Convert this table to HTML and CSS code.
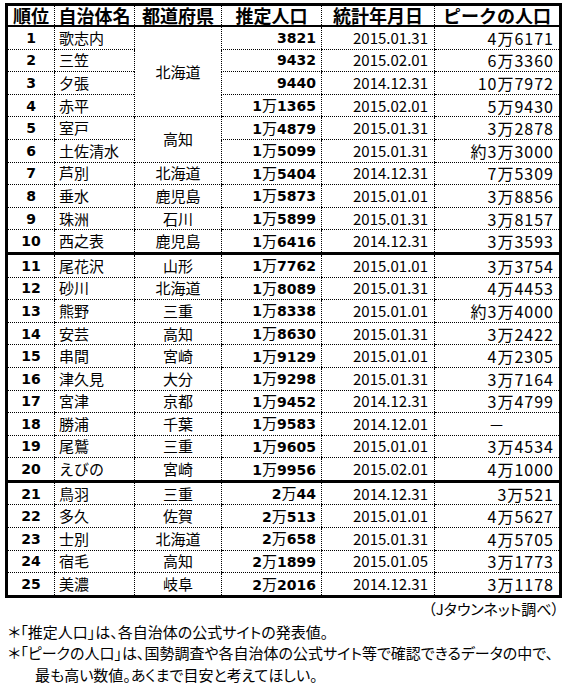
FILE: index.html
```html
<!DOCTYPE html>
<html lang="ja">
<head>
<meta charset="utf-8">
<title>人口の少ない市</title>
<link rel="stylesheet" href="styles.css">
</head>
<body>
<div class="page">
<table class="pop">
<colgroup>
<col class="c1"><col class="c2"><col class="c3"><col class="c4"><col class="c5"><col class="c6">
</colgroup>
<thead>
<tr><th>順位</th><th>自治体名</th><th>都道府県</th><th>推定人口</th><th>統計年月日</th><th>ピークの人口</th></tr>
</thead>
<tbody>
<tr><td class="rk">1</td><td class="nm">歌志内</td><td class="pf" rowspan="4">北海道</td><td class="est">3821</td><td class="dt">2015.01.31</td><td class="pk">4万6171</td></tr>
<tr><td class="rk">2</td><td class="nm">三笠</td><td class="est">9432</td><td class="dt">2015.02.01</td><td class="pk">6万3360</td></tr>
<tr><td class="rk">3</td><td class="nm">夕張</td><td class="est">9440</td><td class="dt">2014.12.31</td><td class="pk">10万7972</td></tr>
<tr><td class="rk">4</td><td class="nm">赤平</td><td class="est">1<span class="man">万</span>1365</td><td class="dt">2015.02.01</td><td class="pk">5万9430</td></tr>
<tr><td class="rk">5</td><td class="nm">室戸</td><td class="pf" rowspan="2">高知</td><td class="est">1<span class="man">万</span>4879</td><td class="dt">2015.01.31</td><td class="pk">3万2878</td></tr>
<tr><td class="rk">6</td><td class="nm">土佐清水</td><td class="est">1<span class="man">万</span>5099</td><td class="dt">2015.01.31</td><td class="pk">約3万3000</td></tr>
<tr><td class="rk">7</td><td class="nm">芦別</td><td class="pf">北海道</td><td class="est">1<span class="man">万</span>5404</td><td class="dt">2014.12.31</td><td class="pk">7万5309</td></tr>
<tr><td class="rk">8</td><td class="nm">垂水</td><td class="pf">鹿児島</td><td class="est">1<span class="man">万</span>5873</td><td class="dt">2015.01.01</td><td class="pk">3万8856</td></tr>
<tr><td class="rk">9</td><td class="nm">珠洲</td><td class="pf">石川</td><td class="est">1<span class="man">万</span>5899</td><td class="dt">2015.01.31</td><td class="pk">3万8157</td></tr>
<tr class="sep"><td class="rk">10</td><td class="nm">西之表</td><td class="pf">鹿児島</td><td class="est">1<span class="man">万</span>6416</td><td class="dt">2014.12.31</td><td class="pk">3万3593</td></tr>
<tr><td class="rk">11</td><td class="nm">尾花沢</td><td class="pf">山形</td><td class="est">1<span class="man">万</span>7762</td><td class="dt">2015.01.01</td><td class="pk">3万3754</td></tr>
<tr><td class="rk">12</td><td class="nm">砂川</td><td class="pf">北海道</td><td class="est">1<span class="man">万</span>8089</td><td class="dt">2015.01.31</td><td class="pk">4万4453</td></tr>
<tr><td class="rk">13</td><td class="nm">熊野</td><td class="pf">三重</td><td class="est">1<span class="man">万</span>8338</td><td class="dt">2015.01.01</td><td class="pk">約3万4000</td></tr>
<tr><td class="rk">14</td><td class="nm">安芸</td><td class="pf">高知</td><td class="est">1<span class="man">万</span>8630</td><td class="dt">2015.01.31</td><td class="pk">3万2422</td></tr>
<tr><td class="rk">15</td><td class="nm">串間</td><td class="pf">宮崎</td><td class="est">1<span class="man">万</span>9129</td><td class="dt">2015.01.01</td><td class="pk">4万2305</td></tr>
<tr><td class="rk">16</td><td class="nm">津久見</td><td class="pf">大分</td><td class="est">1<span class="man">万</span>9298</td><td class="dt">2015.01.31</td><td class="pk">3万7164</td></tr>
<tr><td class="rk">17</td><td class="nm">宮津</td><td class="pf">京都</td><td class="est">1<span class="man">万</span>9452</td><td class="dt">2014.12.31</td><td class="pk">3万4799</td></tr>
<tr><td class="rk">18</td><td class="nm">勝浦</td><td class="pf">千葉</td><td class="est">1<span class="man">万</span>9583</td><td class="dt">2014.12.01</td><td class="pk dash">－</td></tr>
<tr><td class="rk">19</td><td class="nm">尾鷲</td><td class="pf">三重</td><td class="est">1<span class="man">万</span>9605</td><td class="dt">2015.01.01</td><td class="pk">3万4534</td></tr>
<tr class="sep"><td class="rk">20</td><td class="nm">えびの</td><td class="pf">宮崎</td><td class="est">1<span class="man">万</span>9956</td><td class="dt">2015.02.01</td><td class="pk">4万1000</td></tr>
<tr><td class="rk">21</td><td class="nm">鳥羽</td><td class="pf">三重</td><td class="est">2<span class="man">万</span>44</td><td class="dt">2014.12.31</td><td class="pk">3万521</td></tr>
<tr><td class="rk">22</td><td class="nm">多久</td><td class="pf">佐賀</td><td class="est">2<span class="man">万</span>513</td><td class="dt">2015.01.01</td><td class="pk">4万5627</td></tr>
<tr><td class="rk">23</td><td class="nm">士別</td><td class="pf">北海道</td><td class="est">2<span class="man">万</span>658</td><td class="dt">2015.01.31</td><td class="pk">4万5705</td></tr>
<tr><td class="rk">24</td><td class="nm">宿毛</td><td class="pf">高知</td><td class="est">2<span class="man">万</span>1899</td><td class="dt">2015.01.05</td><td class="pk">3万1773</td></tr>
<tr><td class="rk">25</td><td class="nm">美濃</td><td class="pf">岐阜</td><td class="est">2<span class="man">万</span>2016</td><td class="dt">2014.12.31</td><td class="pk">3万1178</td></tr>
</tbody>
</table>
<p class="source">（Jタウンネット調べ）</p>
<div class="notes">
<p class="note">＊「推定人口」は、各自治体の公式サイトの発表値。</p>
<p class="note">＊「ピークの人口」は、国勢調査や各自治体の公式サイト等で確認できるデータの中で、</p>
<p class="note indent">最も高い数値。あくまで目安と考えてほしい。</p>
</div>
</div>
</body>
</html>
```

FILE: styles.css
```css
html, body {
  margin: 0;
  padding: 0;
  background: #fff;
}

.page {
  padding: 3px 0 0 5px;
  font-family: "Noto Sans CJK JP", sans-serif;
  color: #000;
}

.pop {
  border-collapse: collapse;
  border: 3px solid #000;
  table-layout: fixed;
  width: 554px;
}

.c1 { width: 48px; }
.c2 { width: 80px; }
.c3 { width: 87px; }
.c4 { width: 100px; }
.c5 { width: 113px; }
.c6 { width: 126px; }

.pop th {
  font-size: 18px;
  font-weight: 700;
  height: 19px;
  padding: 0;
  line-height: 19px;
  text-align: center;
  border-left: 1px dotted #000;
  border-bottom: 2px solid #000;
  white-space: nowrap;
}

.pop td {
  height: 21.6px;
  padding: 0;
  line-height: 18px;
  border-left: 1px dotted #000;
  border-bottom: 1px dotted #000;
  white-space: nowrap;
}

.pop tr.sep td {
  border-bottom: 3px solid #000;
}

.rk {
  text-align: center;
  font-family: "DejaVu Sans", sans-serif;
  font-weight: 700;
  font-size: 14px;
}

.nm {
  font-size: 15px;
  padding-left: 4px !important;
}

.pf {
  font-size: 15px;
  text-align: center;
}

.est {
  text-align: right;
  font-family: "DejaVu Sans", sans-serif;
  font-weight: 700;
  font-size: 14px;
  padding-right: 5px !important;
}

.man {
  font-family: "Noto Sans CJK JP", sans-serif;
  font-weight: 400;
  font-size: 15px;
}

.dt {
  text-align: right;
  font-size: 15px;
  font-weight: 400;
  padding-right: 6px !important;
}

.pk {
  text-align: right;
  font-size: 16px;
  font-weight: 400;
  letter-spacing: 1px;
  padding-right: 5px !important;
}

.pk.dash {
  text-align: center;
  padding-right: 0 !important;
}

.source {
  margin: 0;
  width: 554px;
  text-align: right;
  font-size: 15px;
  line-height: 20px;
  padding-top: 1px;
  font-feature-settings: "palt";
}

.notes {
  margin-top: 2px;
}

.note {
  margin: 0;
  font-size: 15px;
  line-height: 21.5px;
  padding-left: 3px;
  white-space: nowrap;
  font-feature-settings: "palt";
}

.note.indent {
  padding-left: 30px;
}
```
